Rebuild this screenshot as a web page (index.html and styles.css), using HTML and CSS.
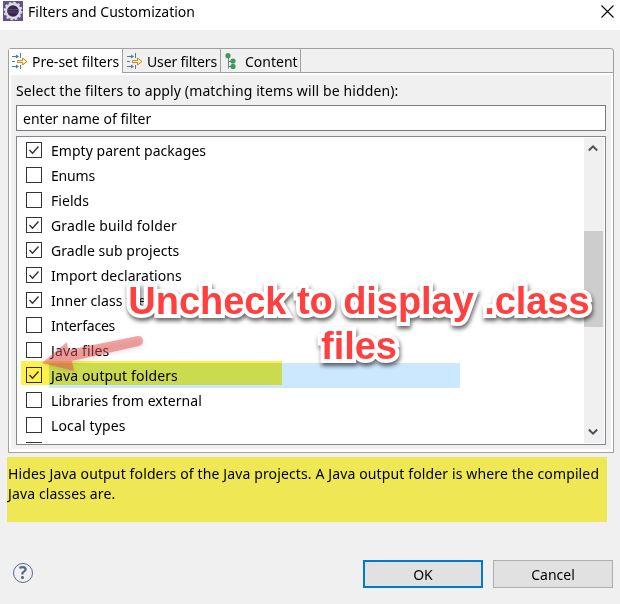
FILE: index.html
```html
<!DOCTYPE html>
<html lang="en">
<head>
<meta charset="utf-8">
<title>Filters and Customization</title>
<link rel="stylesheet" href="styles.css">
</head>
<body>
<svg class="defs" width="0" height="0" aria-hidden="true">
  <symbol id="filter" viewBox="0 0 16 16">
    <path d="M0 3.500h5M0 13.500h5M0 8.500h3" stroke="#487ca0" fill="none"/>
    <path d="M4 1.500l3 2-3 2zM4 11.500l3 2-3 2z" fill="#487ca0"/>
    <path d="M8.500 0v5M8.500 12v4" stroke="#487ca0"/>
    <path d="M5.500 7.500h5v-2.500l4.500 3.500-4.500 3.500v-2.500h-5z" fill="#fdf0c4" stroke="#c98a1d"/>
  </symbol>
  <symbol id="tick" viewBox="0 0 14 14"><path d="M2.500 7l3 3.200L11.500 3.500" fill="none" stroke="#333" stroke-width="1.400"/></symbol>
</svg>
<header class="titlebar">
  <svg class="app" viewBox="0 0 20 20">
    <rect width="20" height="20" fill="#63518a"/>
    <circle cx="10" cy="10" r="8.500" fill="none" stroke="#d8d6dc" stroke-width="2" stroke-dasharray="2.500 1.950"/>
    <circle cx="10" cy="10" r="7" fill="#372553" stroke="#dddbe0" stroke-width="2.400"/>
    <path d="M4.500 8.500h11M4.500 11h11" stroke="#5c4b78"/>
  </svg>
  <h1 class="title">Filters and Customization</h1>
  <svg class="close" viewBox="0 0 13 13"><path d="M.5.5l12 12M12.500.5l-12 12" stroke="#000" stroke-width="1.100"/></svg>
</header>
<main class="dialog">
  <section class="folder">
    <nav class="tabs">
      <div class="tab on"><svg class="ico"><use href="#filter"/></svg><span>Pre-set filters</span></div>
      <div class="tab second"><svg class="ico"><use href="#filter"/></svg><span>User filters</span></div>
      <div class="tab third"><svg class="ico" viewBox="0 0 16 16"><path d="M3.500 4v11.500M3.500 8.500h4M3.500 13.500h4" stroke="#6b7f99" fill="none"/><g fill="#43965a"><circle cx="3" cy="2.700" r="2.600"/><circle cx="8" cy="8" r="2.600"/><circle cx="8" cy="13.400" r="2.600"/></g></svg><span>Content</span></div>
    </nav>
    <div class="page">
      <p class="label">Select the filters to apply (matching items will be hidden):</p>
      <div class="field"><span>enter name of filter</span></div>
      <div class="list">
        <ul class="rows">
          <li><i class="box"><svg><use href="#tick"/></svg></i><span>Empty parent packages</span></li>
          <li><i class="box"></i><span class="tight">Enums</span></li>
          <li><i class="box"></i><span>Fields</span></li>
          <li><i class="box"><svg><use href="#tick"/></svg></i><span class="wide">Gradle build folder</span></li>
          <li><i class="box"><svg><use href="#tick"/></svg></i><span>Gradle sub projects</span></li>
          <li><i class="box"><svg><use href="#tick"/></svg></i><span>Import declarations</span></li>
          <li><i class="box"><svg><use href="#tick"/></svg></i><span>Inner class files</span></li>
          <li><i class="box"></i><span class="tight">Interfaces</span></li>
          <li><i class="box"></i><span class="wide">Java files</span></li>
          <li class="selected"><i class="box"><svg><use href="#tick"/></svg></i><span class="wide">Java output folders</span></li>
          <li><i class="box"></i><span>Libraries from external</span></li>
          <li><i class="box"></i><span class="wide">Local types</span></li>
          <li><i class="box"></i></li>
        </ul>
        <div class="scroll">
          <svg viewBox="0 0 10 8"><path d="M.8 6.500L5 2.300l4.200 4.200" fill="none" stroke="#505050" stroke-width="2"/></svg>
          <div class="thumb"></div>
          <svg viewBox="0 0 10 8"><path d="M.8 1.500L5 5.700l4.200-4.200" fill="none" stroke="#505050" stroke-width="2"/></svg>
        </div>
      </div>
    </div>
  </section>
  <p class="hint">Hides Java output folders of the Java projects. A Java output folder is where the compiled<br>Java classes are.</p>
  <footer class="foot">
    <div class="help">?</div>
    <button class="btn ok">OK</button>
    <button class="btn cancel">Cancel</button>
  </footer>
</main>
<svg class="arrow" viewBox="0 0 110 50"><path d="M7 32L32 11l1 8L103 5q5 0 5 5 0 4-4 5L37 30l2 10z"/></svg>
<div class="note">Uncheck to display .class<br>files</div>
</body>
</html>
```
FILE: styles.css
```css
* { box-sizing: border-box; }
body { margin: 0; width: 620px; height: 604px; overflow: hidden; position: relative; background: #f0f0f0; color: #000; font: 14px/20px "Noto Sans", sans-serif; }
p, h1, ul { margin: 0; padding: 0; }
.defs { display: block; }
.titlebar { height: 30px; background: #fff; display: flex; align-items: flex-start; padding: 1px 6px 0 3px; }
.app { width: 20px; height: 20px; }
.title { font-size: 14px; font-weight: 400; margin: 1px 0 0 5px; flex: 1; }
.close { width: 13px; height: 13px; margin-top: 4px; }
.dialog { padding: 18px 7px 0 8px; }
.folder { width: 606px; height: 405px; border: 1px solid #a0a0a0; border-radius: 3px 3px 0 0; }
.tabs { height: 24px; display: flex; border-bottom: 1px solid #a0a0a0; }
.tab { display: flex; align-items: center; border-right: 1px solid #a0a0a0; padding-left: 3px; height: 23px; white-space: nowrap; }
.tab span { padding-top: 2px; }
.tab.on { background: #fff; width: 114px; height: 24px; }
.second { width: 98px; padding-left: 4px; letter-spacing: -.15px; }
.third { width: 80px; padding-left: 4px; }
.ico { width: 16px; height: 16px; flex: none; margin-right: 4px; }
.page { height: 379px; border: solid #fff; border-width: 2px 2px 3px 2px; padding: 6px 5px 0; }
.label { height: 24px; white-space: nowrap; letter-spacing: .12px; }
.field { height: 26px; width: 590px; border: 1px solid #7a7a7a; background: #fff; padding: 3px 6px 0; letter-spacing: .03px; }
.list { margin-top: 5px; height: 309px; width: 590px; border: 1px solid #828790; background: #fff; display: flex; justify-content: space-between; padding: 1px; }
.rows { list-style: none; overflow: hidden; flex: 1; }
.rows li { height: 25px; display: flex; align-items: flex-start; padding-left: 8px; }
.box { width: 16px; height: 16px; border: 1px solid #333; background: #fff; flex: none; margin: 4px 7px 0 0; }
.box svg { display: block; width: 14px; height: 14px; }
.rows span { padding-left: 2px; line-height: 25px; white-space: nowrap; letter-spacing: .04px; }
.rows .wide { letter-spacing: .14px; }
.rows .tight { letter-spacing: -.2px; }
.rows .selected { width: 442px; background: linear-gradient(#cce8ff, #cce8ff) 31px 0 / 411px 25px no-repeat; position: relative; }
.rows .selected::after { content: ""; position: absolute; left: 3px; top: -2px; width: 261px; height: 24px; background: #fff04f; mix-blend-mode: multiply; }
.scroll { width: 20px; background: #f0f0f0; display: flex; flex-direction: column; }
.scroll svg { width: 10px; height: 8px; margin: 6px 0 0 4px; flex: none; }
.thumb { height: 96px; width: 19px; background: #cdcdcd; margin: 79px 0 95px; }
.hint { margin: 4px 0 0 -1px; width: 600px; height: 65px; background: #f0e754; padding: 7px 1px; white-space: nowrap; letter-spacing: .13px; }
.foot { display: flex; align-items: flex-start; margin-top: 38px; }
.help { width: 20px; height: 20px; margin: 3px auto 0 5px; border: 1px solid #546a8c; border-radius: 50%; color: #546a8c; font: bold 17px/18px "Open Sans", sans-serif; text-align: center; }
.btn { width: 120px; height: 28px; border: 1px solid #adadad; background: #e1e1e1; font: inherit; padding: 1px 0 0; color: #000; }
.ok { border: 2px solid #0078d7; margin-right: 10px; }
.arrow { position: absolute; left: 35px; top: 331px; width: 110px; height: 50px; fill: #ec4e50; fill-opacity: .5; filter: drop-shadow(0 2px 2px rgba(0,0,0,.2)); }
.note { position: absolute; left: 109px; top: 279px; width: 500px; text-align: center; font: bold 38px/45px "Liberation Sans", sans-serif; letter-spacing: -.05px; color: #ff4040; -webkit-text-stroke: 8px #fff; paint-order: stroke fill; stroke-linejoin: round; filter: drop-shadow(1px 3px 2px rgba(0,0,0,.6)); white-space: nowrap; }
```
